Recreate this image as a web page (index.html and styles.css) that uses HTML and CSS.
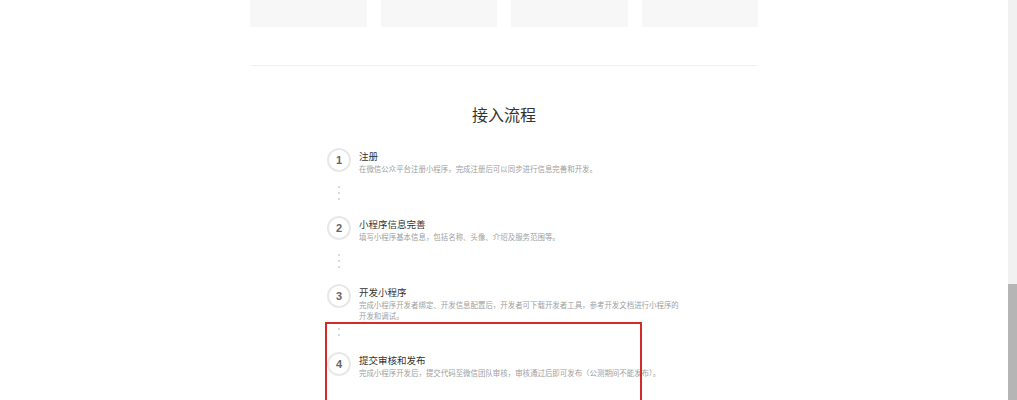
FILE: index.html
```html
<!DOCTYPE html>
<html lang="zh-CN">
<head>
  <meta charset="UTF-8">
  <title>接入流程</title>
  <link rel="stylesheet" href="styles.css">
</head>
<body>
  <div class="page">
    <div class="main">
      <div class="cards">
        <div class="card"></div>
        <div class="card"></div>
        <div class="card"></div>
        <div class="card"></div>
      </div>
      <div class="divider"></div>
      <h2 class="title">接入流程</h2>
      <div class="steps">
        <div class="step">
          <div class="marker">
            <div class="num">1</div>
            <div class="dots"><i></i><i></i><i></i></div>
          </div>
          <div class="info">
            <h3>注册</h3>
            <p>在微信公众平台注册小程序&#65292;完成注册后可以同步进行信息完善和开发。</p>
          </div>
        </div>
        <div class="step">
          <div class="marker">
            <div class="num">2</div>
            <div class="dots"><i></i><i></i><i></i></div>
          </div>
          <div class="info">
            <h3>小程序信息完善</h3>
            <p>填写小程序基本信息&#65292;包括名称、头像、介绍及服务范围等。</p>
          </div>
        </div>
        <div class="step">
          <div class="marker">
            <div class="num">3</div>
            <div class="dots"><i></i><i></i><i></i></div>
          </div>
          <div class="info">
            <h3>开发小程序</h3>
            <p>完成小程序开发者绑定、开发信息配置后&#65292;开发者可下载开发者工具&#65292;参考开发文档进行小程序的开发和调试。</p>
          </div>
        </div>
        <div class="step">
          <div class="marker">
            <div class="num">4</div>
          </div>
          <div class="info">
            <h3>提交审核和发布</h3>
            <p>完成小程序开发后&#65292;提交代码至微信团队审核&#65292;审核通过后即可发布&#65288;公测期间不能发布&#65289;。</p>
          </div>
        </div>
      </div>
      <div class="highlight"></div>
    </div>
    <div class="scrollbar">
      <div class="thumb"></div>
    </div>
  </div>
</body>
</html>
```

FILE: styles.css
```css
html, body {
  margin: 0;
  padding: 0;
  height: 400px;
  overflow: hidden;
  background-color: #fff;
  font-family: "Noto Sans CJK SC", "Liberation Sans", sans-serif;
}

.page {
  display: flex;
  height: 400px;
}

.main {
  position: relative;
  flex: 1;
  overflow: hidden;
}

.cards {
  display: grid;
  grid-template-columns: repeat(4, 1fr);
  gap: 14px;
  width: 508px;
  margin: 0 auto;
}

.card {
  height: 27px;
  background-color: #f7f7f7;
}

.divider {
  width: 508px;
  height: 1px;
  margin: 38px auto 0;
  background-color: #f0f0f0;
}

.title {
  margin: 36px 0 0;
  height: 24px;
  line-height: 24px;
  text-align: center;
  font-size: 16px;
  font-weight: 400;
  color: #333;
}

.steps {
  width: 354px;
  margin: 22px 0 0 327px;
}

.step {
  display: flex;
  height: 68px;
}

.marker {
  width: 33px;
  flex-shrink: 0;
}

.num {
  width: 20px;
  height: 20px;
  border: 2px solid #e8e8e8;
  border-radius: 50%;
  line-height: 21px;
  text-align: center;
  font-family: "Liberation Sans", sans-serif;
  font-size: 11px;
  font-weight: 700;
  color: #666;
}

.dots {
  display: flex;
  flex-direction: column;
  gap: 4px;
  margin: 14px 0 0 11px;
}

.dots i {
  display: block;
  width: 2px;
  height: 2px;
  border-radius: 50%;
  background-color: #cfcfcf;
}

.info {
  margin: 1px 0 0 -1px;
}

.info h3 {
  margin: 0;
  height: 13.5px;
  line-height: 14px;
  font-size: 9.5px;
  font-weight: 400;
  color: #333;
}

.info p {
  margin: 0;
  line-height: 11px;
  font-size: 7.45px;
  color: #a0a0a0;
}

.highlight {
  position: absolute;
  left: 325px;
  top: 322px;
  width: 313px;
  height: 200px;
  border: 2px solid #d42a2a;
}

.scrollbar {
  width: 9px;
  flex-shrink: 0;
  padding-top: 284px;
  background-color: #f1f1f1;
}

.thumb {
  height: 116px;
  background-color: #b5b5b5;
}
```
